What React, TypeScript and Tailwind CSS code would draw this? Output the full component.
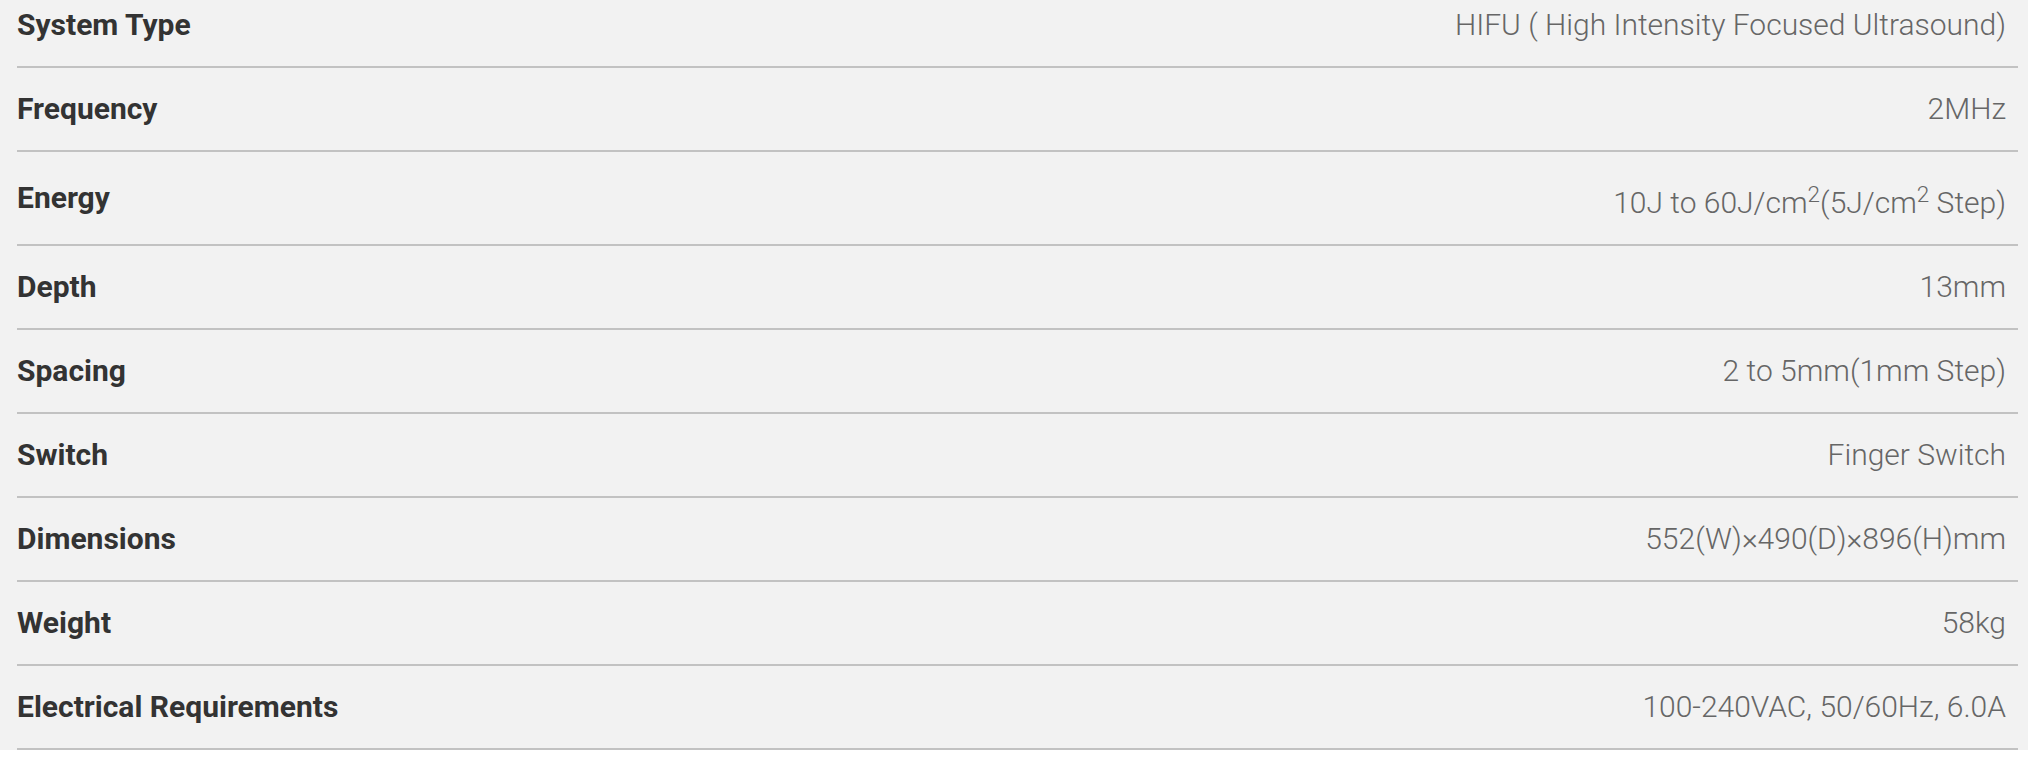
import React from "react";

const rows: { label: string; value: React.ReactNode }[] = [
  { label: "System Type", value: "HIFU ( High Intensity Focused Ultrasound)" },
  { label: "Frequency", value: "2MHz" },
  {
    label: "Energy",
    value: (
      <>
        10J to 60J/cm<span className="align-super text-[0.75em] leading-[45px]">2</span>(5J/cm
        <span className="align-super text-[0.75em] leading-[45px]">2</span> Step)
      </>
    ),
  },
  { label: "Depth", value: "13mm" },
  { label: "Spacing", value: "2 to 5mm(1mm Step)" },
  { label: "Switch", value: "Finger Switch" },
  { label: "Dimensions", value: "552(W)×490(D)×896(H)mm" },
  { label: "Weight", value: "58kg" },
  { label: "Electrical Requirements", value: "100-240VAC, 50/60Hz, 6.0A" },
];

export default function App() {
  return (
    <div
      className="min-h-[760px] w-full bg-[#f2f2f2] pl-[17px] pr-[10px]"
      style={{ fontFamily: "Roboto, 'Liberation Sans', sans-serif" }}
    >
      <div className="-mt-[16px] flex flex-col">
        {rows.map((r) => (
          <div
            key={r.label}
            className="flex items-center justify-between border-b-2 border-[#c2c2c2] py-5 pr-3"
          >
            <div className="text-[30px] font-bold leading-[42px] text-[#333333]">{r.label}</div>
            <div className="text-[30px] font-light leading-[42px] text-[#666666]">{r.value}</div>
          </div>
        ))}
      </div>
    </div>
  );
}
